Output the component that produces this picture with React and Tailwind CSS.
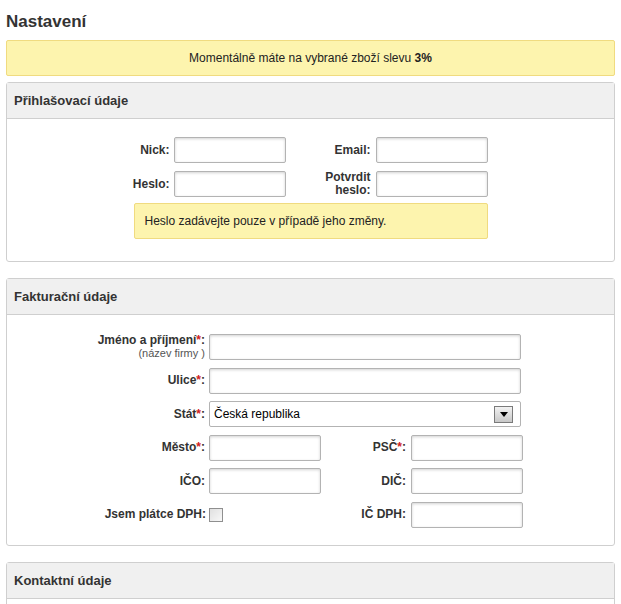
export default function App() {
  const input =
    'h-[26px] border border-[#b3b3b3] rounded-[2px] bg-white shadow-[inset_0_1px_3px_rgba(0,0,0,0.18)]';
  const label = 'flex items-center justify-end whitespace-nowrap font-bold text-[12px] leading-[13px] text-[#333] text-right';
  const star = <span className="text-[#d02020]">*</span>;

  return (
    <div className="min-h-screen bg-white px-[6px] font-['Liberation_Sans',Arial,sans-serif] text-[#333]">
      {/* titulek */}
      <h1 className="pt-[11px] mb-[7px] text-[17px] leading-[22px] font-bold text-[#333]">Nastavení</h1>

      {/* sleva */}
      <div className="h-[36px] flex items-center justify-center border border-[#f0db80] bg-[#fdf4ae] rounded-[2px] text-[12px] text-[#222]">
        Momentálně máte na vybrané zboží slevu&nbsp;<b>3%</b>
      </div>

      {/* Přihlašovací údaje */}
      <div className="mt-[6px] border border-[#cfcfcf] rounded-[3px]">
        <div className="h-[36px] flex items-center px-[7px] bg-[#f0f0f0] border-b border-[#cfcfcf] text-[13px] font-bold text-[#333]">
          Přihlašovací údaje
        </div>
        <div className="pt-[18px] pb-[22px]">
          <div className="mx-auto w-[354px] grid grid-cols-[40px_112px_90px_112px] gap-y-[8px]">
            <div className={label + ' pr-[4px]'}>Nick:</div>
            <div className={input} />
            <div className={label + ' pr-[5px]'}>Email:</div>
            <div className={input + ' shadow-[inset_0_0_6px_3px_rgba(0,0,0,0.12)]'} />

            <div className={label + ' pr-[4px]'}>Heslo:</div>
            <div className={input} />
            <div className={label + ' pr-[5px]'}>
              <span>
                Potvrdit
                <br />
                heslo:
              </span>
            </div>
            <div className={input} />

            <div className="col-span-4 -mt-[2px] h-[36px] flex items-center px-[10px] border border-[#f0db80] bg-[#fdf4ae] rounded-[2px] text-[12px] text-[#222]">
              Heslo zadávejte pouze v případě jeho změny.
            </div>
          </div>
        </div>
      </div>

      {/* Fakturační údaje */}
      <div className="mt-[16px] border border-[#cfcfcf] rounded-[3px]">
        <div className="h-[36px] flex items-center px-[7px] bg-[#f0f0f0] border-b border-[#cfcfcf] text-[13px] font-bold text-[#333]">
          Fakturační údaje
        </div>
        <div className="pt-[19px] pb-[17px]">
          <div className="mx-auto w-[425px] grid grid-cols-[111px_112px_90px_112px] gap-y-[7.6px]">
            <div className={label + ' pr-[4px]'}>
              <span>
                Jméno a příjmení{star}:
                <br />
                <span className="font-normal text-[11px] text-[#555]">(název firmy )</span>
              </span>
            </div>
            <div className={input + ' col-span-3 w-[312px]'} />

            <div className={label + ' pr-[4px]'}>
              <span>Ulice{star}:</span>
            </div>
            <div className={input + ' col-span-3 w-[312px]'} />

            <div className={label + ' pr-[4px]'}>
              <span>Stát{star}:</span>
            </div>
            <div className="col-span-3 w-[312px] h-[26px] flex items-center justify-between pl-[4px] pr-[7px] border border-[#b3b3b3] rounded-[2px] bg-white text-[12px] text-black">
              <span>Česká republika</span>
              <span className="w-[19px] h-[17px] flex items-center justify-center border border-[#7a7a7a] bg-gradient-to-b from-[#f2f2f2] to-[#c8c8c8]">
                <svg width="8" height="5" viewBox="0 0 8 5">
                  <path d="M0 0h8L4 5z" fill="#000" />
                </svg>
              </span>
            </div>

            <div className={label + ' pr-[4px]'}>
              <span>Město{star}:</span>
            </div>
            <div className={input} />
            <div className={label + ' pr-[5px]'}>
              <span>PSČ{star}:</span>
            </div>
            <div className={input} />

            <div className={label + ' pr-[4px]'}>IČO:</div>
            <div className={input} />
            <div className={label + ' pr-[5px]'}>DIČ:</div>
            <div className={input} />

            <div className={label + ' pr-[3px]'}>Jsem plátce DPH:</div>
            <div className="flex items-center">
              <span className="w-[14px] h-[14px] border border-[#8f8f8f] bg-gradient-to-br from-[#e0e0e0] to-[#f8f8f8]" />
            </div>
            <div className={label + ' pr-[5px]'}>IČ DPH:</div>
            <div className={input} />
          </div>
        </div>
      </div>

      {/* Kontaktní údaje */}
      <div className="mt-[16px] border border-[#cfcfcf] rounded-[3px]">
        <div className="h-[36px] flex items-center px-[7px] bg-[#f0f0f0] border-b border-[#cfcfcf] text-[13px] font-bold text-[#333]">
          Kontaktní údaje
        </div>
        <div className="h-[60px]" />
      </div>
    </div>
  );
}
